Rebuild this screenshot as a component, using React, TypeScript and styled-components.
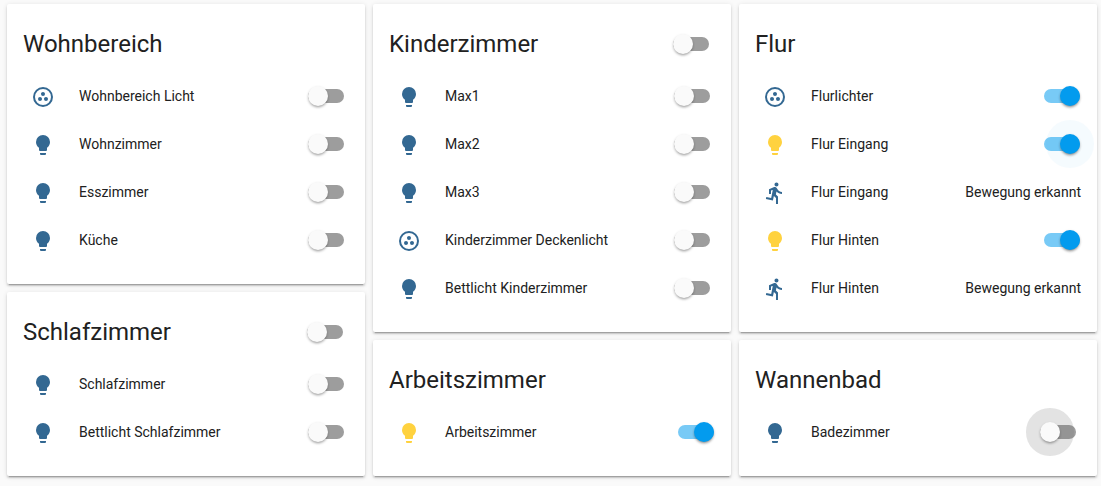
import React, { useId, useState } from 'react';
import styled, { createGlobalStyle, css } from 'styled-components';

const GlobalStyle = createGlobalStyle`
  *, *::before, *::after { box-sizing: border-box; }
  body {
    margin: 0;
    background: #fafafa;
    color: #212121;
    font-family: Roboto, "Liberation Sans", sans-serif;
    font-size: 14px;
    line-height: 20px;
    -webkit-font-smoothing: antialiased;
  }
`;

const Board = styled.main`
  display: grid;
  grid-template-columns: repeat(auto-fit, minmax(320px, 1fr));
  align-items: start;
  gap: 8px;
  padding: 4px 4px 8px 7px;
`;

const Column = styled.div`
  display: flex;
  flex-direction: column;
  gap: 8px;
`;

const Card = styled.section`
  padding-bottom: 24px;
  background: #fff;
  border-radius: 2px;
  box-shadow:
    0 2px 2px 0 rgba(0, 0, 0, 0.14),
    0 1px 5px 0 rgba(0, 0, 0, 0.12),
    0 3px 1px -2px rgba(0, 0, 0, 0.2);
`;

const CardHeader = styled.header`
  display: flex;
  align-items: center;
  justify-content: space-between;
  padding: 24px 17px 16px 16px;
`;

const Title = styled.h2`
  margin: 0;
  font-size: 24px;
  font-weight: 400;
  line-height: 32px;
`;

const Rows = styled.div`
  display: flex;
  flex-direction: column;
  gap: 8px;
  padding: 0 16px;
`;

const Row = styled.div`
  display: flex;
  align-items: center;
  height: 40px;
`;

const IconSlot = styled.span<{ $lit?: boolean }>`
  display: flex;
  flex: none;
  justify-content: center;
  width: 40px;
  padding-top: 2px;
  color: ${(p) => (p.$lit ? '#ffd23f' : '#336892')};
`;

const nameText = css`
  flex: 1;
  min-width: 0;
  margin-left: 16px;
`;
const NameLabel = styled.label`
  ${nameText}
`;
const Name = styled.span`
  ${nameText}
`;

const State = styled.span`
  flex: none;
`;

/* The ripple is a spread shadow of the knob, so it lies over the track and under the knob. */
const Switch = styled.input<{ $ripple?: boolean }>`
  appearance: none;
  display: grid;
  flex: none;
  align-items: center;
  width: 36px;
  height: 20px;
  margin: 0 5px 0 0;
  cursor: pointer;

  &::before {
    content: '';
    grid-area: 1 / 1;
    height: 14px;
    border-radius: 8px;
    background: #9d9d9d;
  }

  &::after {
    content: '';
    grid-area: 1 / 1;
    z-index: 1;
    width: 20px;
    height: 20px;
    border-radius: 50%;
    background: #fafafa;
    box-shadow:
      0 1px 3px 0 rgba(0, 0, 0, 0.12),
      0 2px 3px -1px rgba(0, 0, 0, 0.35)
      ${(p) => p.$ripple && ', 0 0 0 14px rgba(117, 117, 117, 0.2)'};
  }

  &:checked {
    margin-right: 1px;
  }

  &:checked::before {
    background: #78caf6;
  }

  &:checked::after {
    justify-self: end;
    background: #039bee;
    box-shadow:
      0 1px 3px 0 rgba(0, 0, 0, 0.16),
      0 2px 3px -1px rgba(0, 0, 0, 0.4)
      ${(p) => p.$ripple && ', 0 0 0 14px rgba(3, 155, 238, 0.04)'};
  }
`;

const iconPaths = {
  bulb: 'M12,2A7,7 0 0,0 5,9C5,11.38 6.19,13.47 8,14.74V17A1,1 0 0,0 9,18H15A1,1 0 0,0 16,17V14.74C17.81,13.47 19,11.38 19,9A7,7 0 0,0 12,2M9,21A1,1 0 0,0 10,22H14A1,1 0 0,0 15,21V20H9V21Z',
  group:
    'M15,12C13.89,12 13,12.89 13,14A2,2 0 0,0 15,16A2,2 0 0,0 17,14C17,12.89 16.1,12 15,12M12,20A8,8 0 0,1 4,12A8,8 0 0,1 12,4A8,8 0 0,1 20,12A8,8 0 0,1 12,20M12,2A10,10 0 0,0 2,12A10,10 0 0,0 12,22A10,10 0 0,0 22,12A10,10 0 0,0 12,2M14,9C14,7.89 13.1,7 12,7C10.89,7 10,7.89 10,9A2,2 0 0,0 12,11A2,2 0 0,0 14,9M9,12A2,2 0 0,0 7,14A2,2 0 0,0 9,16C10.11,16 11,15.1 11,14C11,12.89 10.11,12 9,12Z',
  run: 'M13.49,5.48C14.59,5.48 15.49,4.58 15.49,3.48C15.49,2.38 14.59,1.48 13.49,1.48C12.39,1.48 11.49,2.38 11.49,3.48C11.49,4.58 12.39,5.48 13.49,5.48M9.89,19.38L10.89,14.98L12.99,16.98V22.98H14.99V15.48L12.89,13.48L13.49,10.48C14.79,11.98 16.79,12.98 18.99,12.98V10.98C17.09,10.98 15.49,9.98 14.69,8.58L13.69,6.98C13.29,6.38 12.69,5.98 11.99,5.98C11.69,5.98 11.49,6.08 11.19,6.08L5.99,8.28V12.98H7.99V9.58L9.79,8.88L8.19,16.98L3.29,15.98L2.89,17.98L9.89,19.38Z',
};

interface Entity {
  name: string;
  icon: keyof typeof iconPaths;
  on?: boolean;
  ripple?: boolean;
  state?: string;
}

interface Room {
  title: string;
  master?: boolean;
  entities: Entity[];
}

const columns: Room[][] = [
  [
    {
      title: 'Wohnbereich',
      entities: [
        { name: 'Wohnbereich Licht', icon: 'group' },
        { name: 'Wohnzimmer', icon: 'bulb' },
        { name: 'Esszimmer', icon: 'bulb' },
        { name: 'Küche', icon: 'bulb' },
      ],
    },
    {
      title: 'Schlafzimmer',
      master: true,
      entities: [
        { name: 'Schlafzimmer', icon: 'bulb' },
        { name: 'Bettlicht Schlafzimmer', icon: 'bulb' },
      ],
    },
  ],
  [
    {
      title: 'Kinderzimmer',
      master: true,
      entities: [
        { name: 'Max1', icon: 'bulb' },
        { name: 'Max2', icon: 'bulb' },
        { name: 'Max3', icon: 'bulb' },
        { name: 'Kinderzimmer Deckenlicht', icon: 'group' },
        { name: 'Bettlicht Kinderzimmer', icon: 'bulb' },
      ],
    },
    {
      title: 'Arbeitszimmer',
      entities: [{ name: 'Arbeitszimmer', icon: 'bulb', on: true }],
    },
  ],
  [
    {
      title: 'Flur',
      entities: [
        { name: 'Flurlichter', icon: 'group', on: true },
        { name: 'Flur Eingang', icon: 'bulb', on: true, ripple: true },
        { name: 'Flur Eingang', icon: 'run', state: 'Bewegung erkannt' },
        { name: 'Flur Hinten', icon: 'bulb', on: true },
        { name: 'Flur Hinten', icon: 'run', state: 'Bewegung erkannt' },
      ],
    },
    {
      title: 'Wannenbad',
      entities: [{ name: 'Badezimmer', icon: 'bulb', ripple: true }],
    },
  ],
];

function EntityRow({ entity }: { entity: Entity }) {
  const id = useId();
  const [on, setOn] = useState(Boolean(entity.on));
  return (
    <Row>
      <IconSlot $lit={on && entity.icon === 'bulb'}>
        <svg width="24" height="24" viewBox="0 0 24 24" fill="currentColor" aria-hidden="true">
          <path d={iconPaths[entity.icon]} />
        </svg>
      </IconSlot>
      {entity.state ? (
        <>
          <Name>{entity.name}</Name>
          <State>{entity.state}</State>
        </>
      ) : (
        <>
          <NameLabel htmlFor={id}>{entity.name}</NameLabel>
          <Switch
            id={id}
            type="checkbox"
            checked={on}
            onChange={(e) => setOn(e.target.checked)}
            $ripple={entity.ripple}
          />
        </>
      )}
    </Row>
  );
}

function RoomCard({ room }: { room: Room }) {
  const titleId = useId();
  return (
    <Card>
      <CardHeader>
        <Title id={titleId}>{room.title}</Title>
        {room.master && <Switch type="checkbox" aria-labelledby={titleId} />}
      </CardHeader>
      <Rows>
        {room.entities.map((entity, i) => (
          <EntityRow key={i} entity={entity} />
        ))}
      </Rows>
    </Card>
  );
}

export default function App() {
  return (
    <>
      <GlobalStyle />
      <Board>
        {columns.map((rooms, i) => (
          <Column key={i}>
            {rooms.map((room) => (
              <RoomCard key={room.title} room={room} />
            ))}
          </Column>
        ))}
      </Board>
    </>
  );
}
